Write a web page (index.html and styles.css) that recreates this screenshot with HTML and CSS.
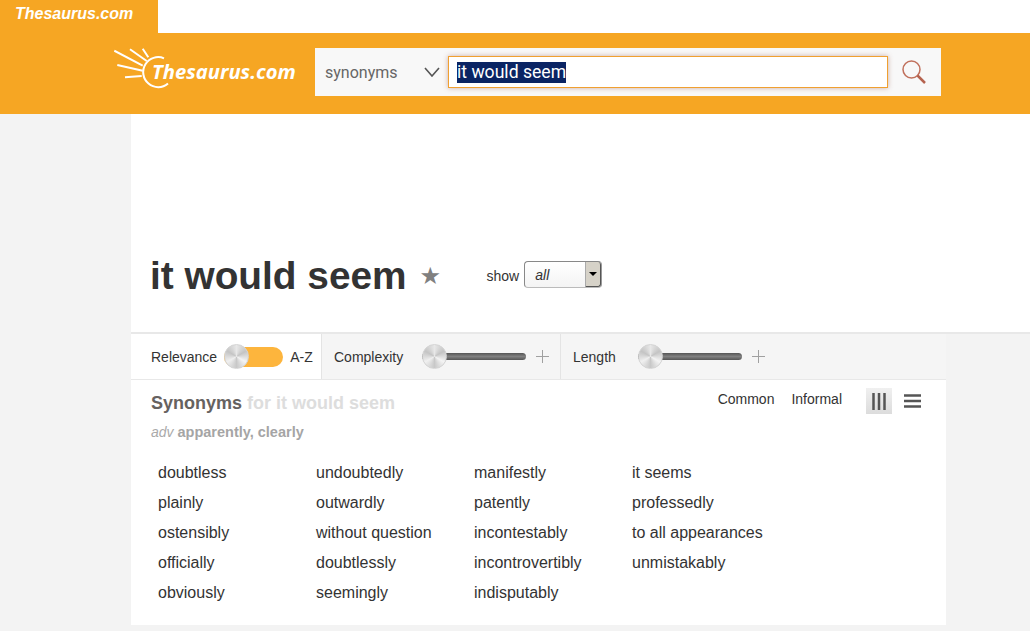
FILE: index.html
```html
<!DOCTYPE html>
<html>
    <head>
        <meta charset="utf-8">
        <title>it would seem</title>
        <link rel="stylesheet" href="styles.css">
    </head>
    <body>
        <div class="topbar">
            <a class="tab">Thesaurus.com</a>
        </div>
        <div class="header">
            <div class="logo">
                <svg class="sun" width="60" height="46" viewBox="0 0 60 46">
                    <path d="M0.3 2.7 L28.7 17.7 M16 1.3 L32.7 13 M28.7 0.7 L34.3 9.3 M3.3 17 L28.7 22.7 M11 29.3 L27.7 28" stroke="#fff" stroke-width="2" fill="none"/>
                    <path d="M50 10.3 A15 15 0 1 0 54 35.5" stroke="#fff" stroke-width="2" fill="none"/>
                </svg>
                <span class="logo-text">Thesaurus.com</span>
            </div>
            <div class="search">
                <div class="kind">
                    <span>synonyms</span>
                    <svg width="16" height="10" viewBox="0 0 16 10"><path d="M1 1 L8 9 L15 1" stroke="#555" stroke-width="1.6" fill="none"/></svg>
                </div>
                <div class="query"><span class="selected">it would seem</span></div>
                <svg class="glass" width="26" height="26" viewBox="0 0 26 26">
                    <circle cx="10.5" cy="10.5" r="8.5" stroke="#c0705c" stroke-width="1.5" fill="none"/>
                    <path d="M16.5 16.5 L24 24" stroke="#b5634f" stroke-width="2.5"/>
                </svg>
            </div>
        </div>
        <div class="page">
            <div class="heading">
                <h1>it would seem</h1>
                <span class="star">★</span>
                <span class="show">show</span>
                <div class="dropdown"><i>all</i><span class="arrow"></span></div>
            </div>
            <div class="column">
                <div class="filters">
                    <div class="filter first">
                        <span>Relevance</span>
                        <div class="toggle"><span class="knob"></span></div>
                        <span>A-Z</span>
                    </div>
                    <div class="filter second">
                        <span class="name">Complexity</span>
                        <div class="slider"><span class="knob"></span></div>
                        <span class="plus"></span>
                    </div>
                    <div class="filter third">
                        <span class="name">Length</span>
                        <div class="slider"><span class="knob"></span></div>
                        <span class="plus"></span>
                    </div>
                </div>
                <div class="results">
                    <div class="results-top">
                        <div>
                            <h2>Synonyms <span>for it would seem</span></h2>
                            <p class="sense"><em>adv</em> <b>apparently, clearly</b></p>
                        </div>
                        <div class="tools">
                            <a>Common</a>
                            <a>Informal</a>
                            <div class="view on">
                                <svg width="14" height="17" viewBox="0 0 14 17"><path d="M1.5 0 V17 M7 0 V17 M12.5 0 V17" stroke="#555" stroke-width="2.5"/></svg>
                            </div>
                            <div class="view">
                                <svg width="17" height="14" viewBox="0 0 17 14"><path d="M0 1.5 H17 M0 7 H17 M0 12.5 H17" stroke="#555" stroke-width="2.5"/></svg>
                            </div>
                        </div>
                    </div>
                    <div class="words">
                        <ul>
                            <li>doubtless</li>
                            <li>plainly</li>
                            <li>ostensibly</li>
                            <li>officially</li>
                            <li>obviously</li>
                        </ul>
                        <ul>
                            <li>undoubtedly</li>
                            <li>outwardly</li>
                            <li>without question</li>
                            <li>doubtlessly</li>
                            <li>seemingly</li>
                        </ul>
                        <ul>
                            <li>manifestly</li>
                            <li>patently</li>
                            <li>incontestably</li>
                            <li>incontrovertibly</li>
                            <li>indisputably</li>
                        </ul>
                        <ul>
                            <li>it seems</li>
                            <li>professedly</li>
                            <li>to all appearances</li>
                            <li>unmistakably</li>
                        </ul>
                    </div>
                </div>
            </div>
        </div>
    </body>
</html>
```

FILE: styles.css
```css
html, body{
    margin: 0;
    padding: 0;
    height: 631px;
    overflow: hidden;
}
body{
    background-color: #f3f3f3;
    color: #333333;
    font-family: "Liberation Sans", Arial, sans-serif;
}
.topbar{
    height: 33px;
    background-color: white;
}
.tab{
    display: block;
    width: 143px;
    height: 33px;
    padding-left: 15px;
    background-color: #f6a623;
    color: white;
    font-size: 16px;
    font-weight: bold;
    font-style: italic;
    line-height: 27px;
}
.header{
    height: 81px;
    background-color: #f6a623;
    display: flex;
    align-items: flex-start;
    padding-left: 114px;
}
.logo{
    width: 201px;
    height: 48px;
    margin-top: 15px;
    display: flex;
    align-items: flex-start;
}
.sun{
    flex: none;
}
.logo-text{
    margin-left: -22px;
    margin-top: 9px;
    color: white;
    font-family: "Open Sans", sans-serif;
    font-size: 20.2px;
    font-weight: 700;
    font-style: italic;
    white-space: nowrap;
}
.search{
    width: 626px;
    height: 48px;
    margin-top: 15px;
    background-color: #f8f8f8;
    display: flex;
    align-items: center;
}
.kind{
    width: 133px;
    padding-left: 10px;
    display: flex;
    align-items: center;
    justify-content: space-between;
    padding-right: 8px;
    box-sizing: border-box;
    font-family: Roboto, sans-serif;
    font-size: 16px;
    color: #666666;
}
.query{
    width: 440px;
    height: 32px;
    box-sizing: border-box;
    background-color: white;
    border: 1px solid #f0a030;
    box-shadow: 0 0 5px rgba(150, 80, 60, 0.45);
    padding-left: 8px;
    font-family: Roboto, sans-serif;
    font-size: 17.6px;
    line-height: 30px;
    color: #222222;
}
.selected{
    display: inline-block;
    height: 21px;
    line-height: 21px;
    background-color: #0a2463;
    color: white;
    vertical-align: middle;
    margin-top: -2px;
}
.glass{
    margin-left: 13px;
}
.page{
    margin-left: 131px;
}
.heading{
    height: 218px;
    background-color: white;
    display: flex;
    align-items: flex-start;
    border-bottom: 2px solid #e8e8e8;
    padding-left: 19px;
}
h1{
    margin: 140px 0 0 0;
    font-size: 38.8px;
    line-height: 44px;
    font-weight: bold;
    color: #333333;
}
.star{
    margin: 147px 0 0 13px;
    font-size: 24px;
    line-height: 30px;
    width: 24px;
    color: #808080;
    font-family: "DejaVu Sans", sans-serif;
}
.show{
    margin: 154px 0 0 43px;
    font-size: 14px;
    line-height: 16px;
}
.dropdown{
    margin: 147px 0 0 5px;
    width: 78px;
    height: 27px;
    box-sizing: border-box;
    border: 1px solid #888888;
    border-bottom-color: #bbbbbb;
    border-right-color: #999999;
    border-radius: 4px;
    background-image: linear-gradient(#ffffff, #f4f4f4);
    font-size: 14px;
    line-height: 26px;
    padding-left: 10px;
    position: relative;
}
.arrow{
    position: absolute;
    right: 0;
    top: 0;
    width: 16px;
    height: 25px;
    background-color: #d6d2c8;
    border-left: 1px solid #aaaaaa;
    border-right: 1px solid #555555;
    border-bottom: 1px solid #555555;
    box-sizing: border-box;
    border-radius: 0 3px 3px 0;
}
.arrow::after{
    content: "";
    position: absolute;
    left: 3px;
    top: 10px;
    border-left: 4px solid transparent;
    border-right: 4px solid transparent;
    border-top: 4px solid black;
}
.column{
    width: 815px;
    height: 291px;
    background-color: white;
}
.filters{
    height: 45px;
    background-color: #f5f5f5;
    border-bottom: 1px solid #e8e8e8;
    display: flex;
    font-size: 14px;
    color: #333333;
}
.filter{
    display: flex;
    align-items: center;
    box-sizing: border-box;
    border-right: 1px solid #e4e4e4;
}
.first{
    width: 191px;
    padding-left: 20px;
    background-color: white;
}
.second{
    width: 239px;
    padding-left: 12px;
}
.third{
    padding-left: 12px;
    border-right: none;
}
.name{
    width: 88px;
}
.third .name{
    width: 64.5px;
}
.toggle{
    position: relative;
    width: 59px;
    height: 20px;
    margin: 0 7px 0 7px;
    border-radius: 10px;
    background-color: #fdb53d;
}
.slider{
    position: relative;
    width: 104px;
    height: 7px;
    border-radius: 4px;
    background-image: linear-gradient(#555555, #808080, #555555);
}
.knob{
    position: absolute;
    left: 0;
    top: 50%;
    width: 25px;
    height: 25px;
    margin-top: -12.5px;
    box-sizing: border-box;
    border: 1px solid #d4d4d4;
    border-radius: 50%;
    background-image: conic-gradient(#e8e8e8, #c4c4c4, #f4f4f4, #c8c8c8, #f0f0f0, #c4c4c4, #e8e8e8);
}
.plus{
    position: relative;
    width: 13px;
    height: 13px;
    margin-left: 10px;
    background-image: linear-gradient(#a0a0a0, #a0a0a0), linear-gradient(#a0a0a0, #a0a0a0);
    background-size: 13px 1px, 1px 13px;
    background-position: center;
    background-repeat: no-repeat;
}
.results{
    padding: 12px 20px 0 20px;
}
.results-top{
    display: flex;
    justify-content: space-between;
}
h2{
    margin: 0;
    font-size: 18px;
    line-height: 22px;
    color: #666260;
}
h2 span{
    color: #dddddd;
}
.sense{
    margin: 9px 0 0 0;
    font-size: 14px;
    line-height: 18px;
    color: #aaaaaa;
}
.sense b{
    color: #a5a5a5;
    font-size: 14.5px;
}
.tools{
    display: flex;
    align-items: flex-start;
    font-size: 14px;
    line-height: 16px;
    margin-right: 1px;
}
.tools a{
    margin-right: 17px;
    margin-top: -1px;
}
.view{
    width: 26px;
    height: 26px;
    display: flex;
    align-items: center;
    justify-content: center;
    margin-top: -4px;
}
.view.on{
    background-image: linear-gradient(#f0f0f0, #dcdcdc);
    margin-left: 7px;
    margin-right: 7px;
}
.words{
    display: flex;
    margin-top: 17px;
    padding-left: 7px;
}
ul{
    margin: 0;
    padding: 0;
    list-style: none;
    width: 158px;
}
li{
    font-size: 16px;
    line-height: 30px;
    color: #333333;
}
```
